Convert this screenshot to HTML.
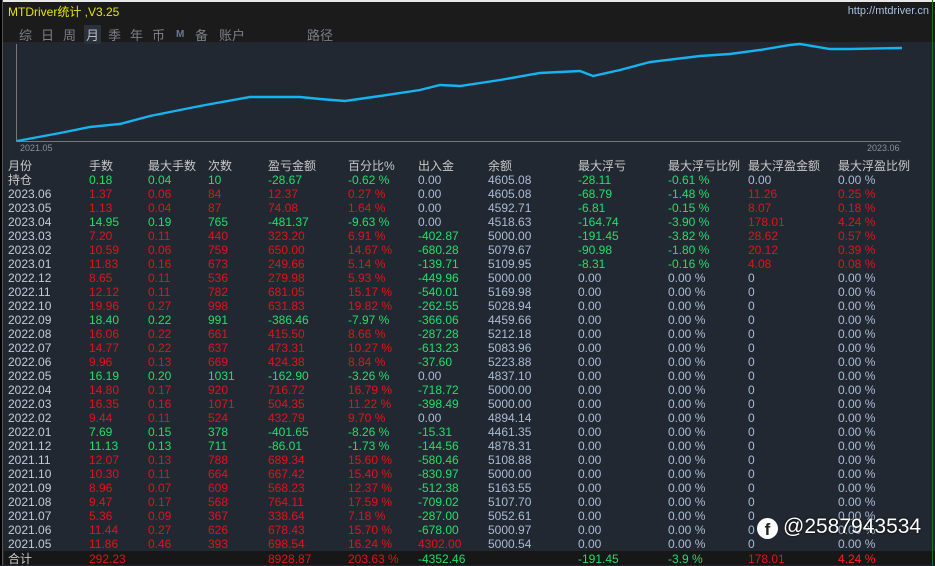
<!DOCTYPE html>
<html><head><meta charset="utf-8"><style>
*{margin:0;padding:0;box-sizing:border-box}
body{width:935px;height:565px;overflow:hidden;background:#222831;font-family:"Liberation Sans","Noto Sans CJK SC",sans-serif;font-size:12px;position:relative}
#top{position:absolute;left:0;top:0;width:935px;height:42px;background:#1b1b1b;border-top:2px solid #e8e8e8}
#left{position:absolute;left:0;top:0;width:3px;height:565px;background:#000;border-right:1px solid #555}
.title{position:absolute;left:8px;top:3px;color:#e6e600;font-size:12px}
.url{position:absolute;right:6px;top:5px;color:#a8c0e0;font-size:11px}
.tabs{position:absolute;left:19px;top:25px;color:#7a7f88;font-size:13px}
.tabs span{position:absolute;top:0;white-space:nowrap}
.r{position:absolute;left:0;width:935px;height:14px;line-height:14px;white-space:nowrap}
.r span{position:absolute;top:0}
.a{left:8px}.b{left:89px}.c{left:148px}.d{left:208px}.e{left:268px}.f{left:348px}.g{left:418px}.h{left:488px}.i{left:578px}.j{left:668px}.k{left:748px}.l{left:838px}
.n{color:#a9bbd6}.G{color:#1fe06a}.R{color:#e0141a}.m{color:#c3c9d6}
.hd{color:#c8c8c8;font-size:12px}
#tot{position:absolute;left:4px;top:551px;width:931px;height:14px;background:#171717}
</style></head><body>
<div id="top"></div>
<div id="left"></div>
<div class="title">MTDriver统计 ,V3.25</div>
<div class="url">http://mtdriver.cn</div>
<div class="tabs">
<span style="left:0">综</span><span style="left:22px">日</span><span style="left:44px">周</span>
<span style="left:65px;background:#2a313b;color:#b8bcc4;padding:0 2px">月</span>
<span style="left:89px">季</span><span style="left:111px">年</span><span style="left:133px">币</span>
<span style="left:157px;font-size:10px;top:4px;color:#6a7a90;font-weight:bold">M</span><span style="left:176px">备</span><span style="left:200px">账户</span>
<span style="left:288px">路径</span></div>
<svg style="position:absolute;left:0;top:0" width="935" height="160">
<line x1="16.5" y1="44" x2="16.5" y2="142" stroke="#777" stroke-width="1"/>
<line x1="16" y1="141.5" x2="901" y2="141.5" stroke="#777" stroke-width="1"/>
<polyline fill="none" stroke="#14b4f0" stroke-width="2.4" points="17,141 60,133 90,127 120,124 150,116 200,106 250,97 300,97 320,99 345,101 380,96 420,90 440,85 460,86 500,80 540,73 580,71 593,76 620,70 650,62 700,56 730,54 760,50 790,45 800,44 830,49 850,49 902,48"/>
<text x="20" y="151" fill="#8a8f98" font-size="9" font-family="Liberation Sans">2021.05</text>
<text x="867" y="151" fill="#8a8f98" font-size="9" font-family="Liberation Sans">2023.06</text>
</svg>
<div class="r hd" style="top:159px"><span class="a">月份</span><span class="b">手数</span><span class="c">最大手数</span><span class="d">次数</span><span class="e">盈亏金额</span><span class="f">百分比%</span><span class="g">出入金</span><span class="h">余额</span><span class="i">最大浮亏</span><span class="j">最大浮亏比例</span><span class="k">最大浮盈金额</span><span class="l">最大浮盈比例</span></div>
<div class="r" style="top:173px"><span class="a hd">持仓</span><span class="b G">0.18</span><span class="c G">0.04</span><span class="d G">10</span><span class="e G">-28.67</span><span class="f G">-0.62 %</span><span class="g n">0.00</span><span class="h n">4605.08</span><span class="i G">-28.11</span><span class="j G">-0.61 %</span><span class="k n">0.00</span><span class="l n">0.00 %</span></div>
<div class="r" style="top:187px"><span class="a m">2023.06</span><span class="b R">1.37</span><span class="c R">0.06</span><span class="d R">84</span><span class="e R">12.37</span><span class="f R">0.27 %</span><span class="g n">0.00</span><span class="h n">4605.08</span><span class="i G">-68.79</span><span class="j G">-1.48 %</span><span class="k R">11.26</span><span class="l R">0.25 %</span></div>
<div class="r" style="top:201px"><span class="a m">2023.05</span><span class="b R">1.13</span><span class="c R">0.04</span><span class="d R">87</span><span class="e R">74.08</span><span class="f R">1.64 %</span><span class="g n">0.00</span><span class="h n">4592.71</span><span class="i G">-6.81</span><span class="j G">-0.15 %</span><span class="k R">8.07</span><span class="l R">0.18 %</span></div>
<div class="r" style="top:215px"><span class="a m">2023.04</span><span class="b G">14.95</span><span class="c G">0.19</span><span class="d G">765</span><span class="e G">-481.37</span><span class="f G">-9.63 %</span><span class="g n">0.00</span><span class="h n">4518.63</span><span class="i G">-164.74</span><span class="j G">-3.90 %</span><span class="k R">178.01</span><span class="l R">4.24 %</span></div>
<div class="r" style="top:229px"><span class="a m">2023.03</span><span class="b R">7.20</span><span class="c R">0.11</span><span class="d R">440</span><span class="e R">323.20</span><span class="f R">6.91 %</span><span class="g G">-402.87</span><span class="h n">5000.00</span><span class="i G">-191.45</span><span class="j G">-3.82 %</span><span class="k R">28.62</span><span class="l R">0.57 %</span></div>
<div class="r" style="top:243px"><span class="a m">2023.02</span><span class="b R">10.59</span><span class="c R">0.06</span><span class="d R">759</span><span class="e R">650.00</span><span class="f R">14.67 %</span><span class="g G">-680.28</span><span class="h n">5079.67</span><span class="i G">-90.98</span><span class="j G">-1.80 %</span><span class="k R">20.12</span><span class="l R">0.39 %</span></div>
<div class="r" style="top:257px"><span class="a m">2023.01</span><span class="b R">11.83</span><span class="c R">0.16</span><span class="d R">673</span><span class="e R">249.66</span><span class="f R">5.14 %</span><span class="g G">-139.71</span><span class="h n">5109.95</span><span class="i G">-8.31</span><span class="j G">-0.16 %</span><span class="k R">4.08</span><span class="l R">0.08 %</span></div>
<div class="r" style="top:271px"><span class="a m">2022.12</span><span class="b R">8.65</span><span class="c R">0.11</span><span class="d R">536</span><span class="e R">279.98</span><span class="f R">5.93 %</span><span class="g G">-449.96</span><span class="h n">5000.00</span><span class="i n">0.00</span><span class="j n">0.00 %</span><span class="k n">0</span><span class="l n">0.00 %</span></div>
<div class="r" style="top:285px"><span class="a m">2022.11</span><span class="b R">12.12</span><span class="c R">0.11</span><span class="d R">782</span><span class="e R">681.05</span><span class="f R">15.17 %</span><span class="g G">-540.01</span><span class="h n">5169.98</span><span class="i n">0.00</span><span class="j n">0.00 %</span><span class="k n">0</span><span class="l n">0.00 %</span></div>
<div class="r" style="top:299px"><span class="a m">2022.10</span><span class="b R">19.96</span><span class="c R">0.27</span><span class="d R">998</span><span class="e R">631.83</span><span class="f R">19.82 %</span><span class="g G">-262.55</span><span class="h n">5028.94</span><span class="i n">0.00</span><span class="j n">0.00 %</span><span class="k n">0</span><span class="l n">0.00 %</span></div>
<div class="r" style="top:313px"><span class="a m">2022.09</span><span class="b G">18.40</span><span class="c G">0.22</span><span class="d G">991</span><span class="e G">-386.46</span><span class="f G">-7.97 %</span><span class="g G">-366.06</span><span class="h n">4459.66</span><span class="i n">0.00</span><span class="j n">0.00 %</span><span class="k n">0</span><span class="l n">0.00 %</span></div>
<div class="r" style="top:327px"><span class="a m">2022.08</span><span class="b R">16.06</span><span class="c R">0.22</span><span class="d R">661</span><span class="e R">415.50</span><span class="f R">8.66 %</span><span class="g G">-287.28</span><span class="h n">5212.18</span><span class="i n">0.00</span><span class="j n">0.00 %</span><span class="k n">0</span><span class="l n">0.00 %</span></div>
<div class="r" style="top:341px"><span class="a m">2022.07</span><span class="b R">14.77</span><span class="c R">0.22</span><span class="d R">637</span><span class="e R">473.31</span><span class="f R">10.27 %</span><span class="g G">-613.23</span><span class="h n">5083.96</span><span class="i n">0.00</span><span class="j n">0.00 %</span><span class="k n">0</span><span class="l n">0.00 %</span></div>
<div class="r" style="top:355px"><span class="a m">2022.06</span><span class="b R">9.96</span><span class="c R">0.13</span><span class="d R">669</span><span class="e R">424.38</span><span class="f R">8.84 %</span><span class="g G">-37.60</span><span class="h n">5223.88</span><span class="i n">0.00</span><span class="j n">0.00 %</span><span class="k n">0</span><span class="l n">0.00 %</span></div>
<div class="r" style="top:369px"><span class="a m">2022.05</span><span class="b G">16.19</span><span class="c G">0.20</span><span class="d G">1031</span><span class="e G">-162.90</span><span class="f G">-3.26 %</span><span class="g n">0.00</span><span class="h n">4837.10</span><span class="i n">0.00</span><span class="j n">0.00 %</span><span class="k n">0</span><span class="l n">0.00 %</span></div>
<div class="r" style="top:383px"><span class="a m">2022.04</span><span class="b R">14.80</span><span class="c R">0.17</span><span class="d R">920</span><span class="e R">716.72</span><span class="f R">16.79 %</span><span class="g G">-718.72</span><span class="h n">5000.00</span><span class="i n">0.00</span><span class="j n">0.00 %</span><span class="k n">0</span><span class="l n">0.00 %</span></div>
<div class="r" style="top:397px"><span class="a m">2022.03</span><span class="b R">16.35</span><span class="c R">0.16</span><span class="d R">1071</span><span class="e R">504.35</span><span class="f R">11.22 %</span><span class="g G">-398.49</span><span class="h n">5000.00</span><span class="i n">0.00</span><span class="j n">0.00 %</span><span class="k n">0</span><span class="l n">0.00 %</span></div>
<div class="r" style="top:411px"><span class="a m">2022.02</span><span class="b R">9.44</span><span class="c R">0.11</span><span class="d R">524</span><span class="e R">432.79</span><span class="f R">9.70 %</span><span class="g n">0.00</span><span class="h n">4894.14</span><span class="i n">0.00</span><span class="j n">0.00 %</span><span class="k n">0</span><span class="l n">0.00 %</span></div>
<div class="r" style="top:425px"><span class="a m">2022.01</span><span class="b G">7.69</span><span class="c G">0.15</span><span class="d G">378</span><span class="e G">-401.65</span><span class="f G">-8.26 %</span><span class="g G">-15.31</span><span class="h n">4461.35</span><span class="i n">0.00</span><span class="j n">0.00 %</span><span class="k n">0</span><span class="l n">0.00 %</span></div>
<div class="r" style="top:439px"><span class="a m">2021.12</span><span class="b G">11.13</span><span class="c G">0.13</span><span class="d G">711</span><span class="e G">-86.01</span><span class="f G">-1.73 %</span><span class="g G">-144.56</span><span class="h n">4878.31</span><span class="i n">0.00</span><span class="j n">0.00 %</span><span class="k n">0</span><span class="l n">0.00 %</span></div>
<div class="r" style="top:453px"><span class="a m">2021.11</span><span class="b R">12.07</span><span class="c R">0.13</span><span class="d R">788</span><span class="e R">689.34</span><span class="f R">15.60 %</span><span class="g G">-580.46</span><span class="h n">5108.88</span><span class="i n">0.00</span><span class="j n">0.00 %</span><span class="k n">0</span><span class="l n">0.00 %</span></div>
<div class="r" style="top:467px"><span class="a m">2021.10</span><span class="b R">10.30</span><span class="c R">0.11</span><span class="d R">664</span><span class="e R">667.42</span><span class="f R">15.40 %</span><span class="g G">-830.97</span><span class="h n">5000.00</span><span class="i n">0.00</span><span class="j n">0.00 %</span><span class="k n">0</span><span class="l n">0.00 %</span></div>
<div class="r" style="top:481px"><span class="a m">2021.09</span><span class="b R">8.96</span><span class="c R">0.07</span><span class="d R">609</span><span class="e R">568.23</span><span class="f R">12.37 %</span><span class="g G">-512.38</span><span class="h n">5163.55</span><span class="i n">0.00</span><span class="j n">0.00 %</span><span class="k n">0</span><span class="l n">0.00 %</span></div>
<div class="r" style="top:495px"><span class="a m">2021.08</span><span class="b R">9.47</span><span class="c R">0.17</span><span class="d R">568</span><span class="e R">764.11</span><span class="f R">17.59 %</span><span class="g G">-709.02</span><span class="h n">5107.70</span><span class="i n">0.00</span><span class="j n">0.00 %</span><span class="k n">0</span><span class="l n">0.00 %</span></div>
<div class="r" style="top:509px"><span class="a m">2021.07</span><span class="b R">5.36</span><span class="c R">0.09</span><span class="d R">367</span><span class="e R">338.64</span><span class="f R">7.18 %</span><span class="g G">-287.00</span><span class="h n">5052.61</span><span class="i n">0.00</span><span class="j n">0.00 %</span><span class="k n">0</span><span class="l n">0.00 %</span></div>
<div class="r" style="top:523px"><span class="a m">2021.06</span><span class="b R">11.44</span><span class="c R">0.27</span><span class="d R">626</span><span class="e R">678.43</span><span class="f R">15.70 %</span><span class="g G">-678.00</span><span class="h n">5000.97</span><span class="i n">0.00</span><span class="j n">0.00 %</span><span class="k n">0</span><span class="l n">0.00 %</span></div>
<div class="r" style="top:537px"><span class="a m">2021.05</span><span class="b R">11.86</span><span class="c R">0.46</span><span class="d R">393</span><span class="e R">698.54</span><span class="f R">16.24 %</span><span class="g R">4302.00</span><span class="h n">5000.54</span><span class="i n">0.00</span><span class="j n">0.00 %</span><span class="k n">0</span><span class="l n">0.00 %</span></div>
<div id="tot"></div>
<div class="r" style="top:552px"><span class="a hd">合计</span><span class="b R">292.23</span><span class="e R">8928.87</span><span class="f R">203.63 %</span><span class="g G">-4352.46</span><span class="i G">-191.45</span><span class="j G">-3.9 %</span><span class="k R">178.01</span><span class="l" style="color:#ff2020">4.24 %</span></div>
<div style="position:absolute;left:757px;top:518px;width:21px;height:21px;border-radius:50%;background:#fff;color:#222;font-weight:bold;font-size:17px;line-height:23px;text-align:center;font-family:'Liberation Sans',sans-serif">f</div>
<div style="position:absolute;left:783px;top:515px;color:#fff;font-size:21px;font-family:'Liberation Sans',sans-serif;text-shadow:0 0 2px #000">@2587943534</div>
<div style="position:absolute;left:932px;top:0;width:3px;height:565px;border-left:1px solid #2a6a2a"></div>
</body></html>
